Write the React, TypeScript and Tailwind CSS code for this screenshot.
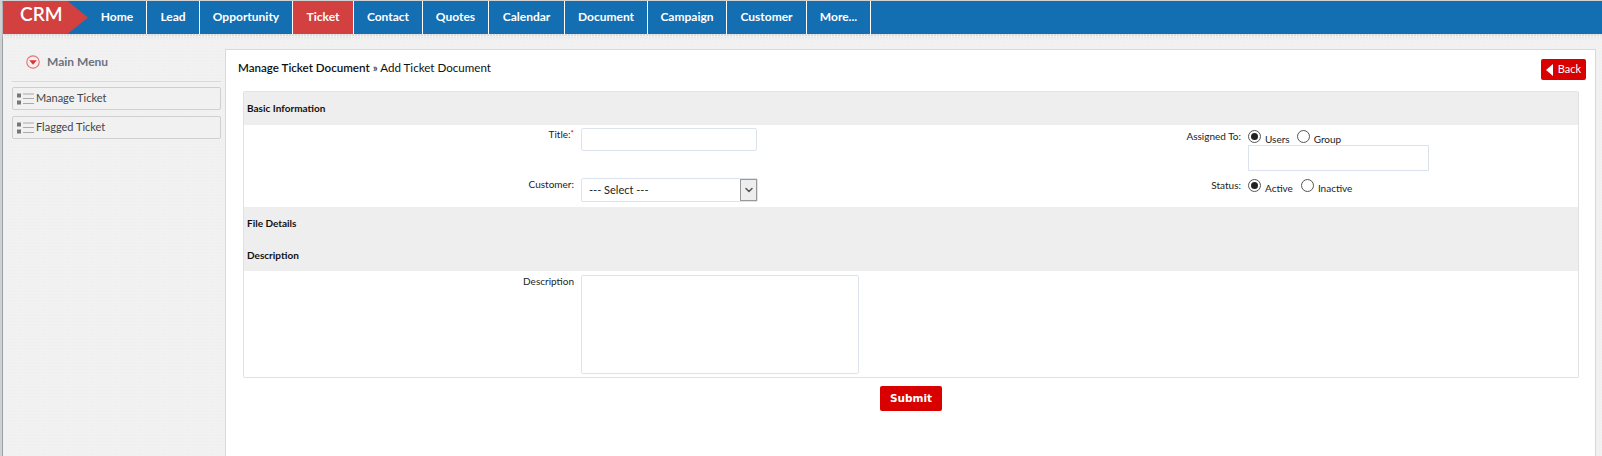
import { ChevronDown } from "lucide-react";

const navItems = [
  { name: "Home", width: "w-[59px]" },
  { name: "Lead", width: "w-[53px]" },
  { name: "Opportunity", width: "w-[93px]" },
  { name: "Ticket", width: "w-[61px]" },
  { name: "Contact", width: "w-[69px]" },
  { name: "Quotes", width: "w-[66px]" },
  { name: "Calendar", width: "w-[76px]" },
  { name: "Document", width: "w-[83px]" },
  { name: "Campaign", width: "w-[79px]" },
  { name: "Customer", width: "w-[80px]" },
  { name: "More...", width: "w-[64px]" },
];

const MenuIcon = () => (
  <svg width="17" height="12" viewBox="0 0 17 12" className="shrink-0">
    <rect x="0" y="0.5" width="4" height="4" fill="#777" />
    <rect x="0" y="7.5" width="4" height="4" fill="#777" />
    <rect x="6" y="0.5" width="11" height="1" fill="#aaa" />
    <rect x="6" y="5" width="11" height="1" fill="#aaa" />
    <rect x="6" y="10" width="11" height="1" fill="#aaa" />
  </svg>
);

const Radio = ({ label, checked }: { label: string; checked?: boolean }) => (
  <span className="flex items-start">
    <span className="flex h-[13px] w-[13px] items-center justify-center rounded-full border border-[#555] bg-white">
      {checked && <span className="h-[7px] w-[7px] rounded-full bg-[#222]" />}
    </span>
    <span className="ml-[4px] mt-[3px] text-[10px] leading-[13px]">{label}</span>
  </span>
);

const SectionHeader = ({ title, className }: { title: string; className: string }) => (
  <div className={`flex items-center bg-[#eeeeee] pl-[3px] text-[10px] font-bold text-[#111] ${className}`}>{title}</div>
);

const Label = ({ children }: { children: React.ReactNode }) => (
  <div className="w-[330px] shrink-0 text-right text-[10px] leading-[13px] text-[#222]">{children}</div>
);

export default function App() {
  return (
    <div className="h-[456px] w-[1602px] overflow-hidden border-l-[2px] border-t border-[#cfd1d3] bg-[#f2f2f2] font-['Lato',sans-serif]">
      <div className="flex h-full flex-col border-l border-[#9aa0a6]">
        <nav className="flex h-[33px] shrink-0 bg-[#136eb2] shadow-[0_3px_3px_#d8dadc]">
          <div className="flex h-[33px] w-[85px] shrink-0 bg-[#d24040] [clip-path:polygon(0_0,76%_0,100%_50%,76%_100%,0_100%)]">
            <span className="ml-[17px] text-[19px] font-semibold leading-[26px] text-white">CRM</span>
          </div>
          {navItems.map((item) => (
            <a
              key={item.name}
              className={`flex h-[33px] items-center justify-center border-r border-white pb-[1px] text-[12px] font-bold text-white ${item.width} ${item.name === "Ticket" ? "bg-[#d24040]" : ""}`}
            >
              {item.name}
            </a>
          ))}
        </nav>

        <div className="flex flex-1 pt-[15px] bg-[linear-gradient(0deg,#f0f0f0_1px,transparent_1px),linear-gradient(90deg,#f0f0f0_1px,transparent_1px)] bg-size-[3px_3px]">
          <aside className="w-[222px] shrink-0 pl-[9px] pr-[4px]">
            <div className="flex h-[33px] items-center border-b border-[#d9d9d9] pb-[6px] pl-[14px]">
              <svg width="14" height="14" viewBox="0 0 14 14" className="mr-[7px]">
                <circle cx="7" cy="7" r="6.2" fill="#f8f0f0" stroke="#e87575" strokeWidth="1.2" />
                <path d="M3.2 5.2h7.6L7 9.8z" fill="#d9363a" />
              </svg>
              <span className="text-[12px] font-bold text-[#6b7280]">Main Menu</span>
            </div>
            <div className="mt-[5px] flex flex-col gap-[6px]">
              {["Manage Ticket", "Flagged Ticket"].map((m) => (
                <div key={m} className="flex h-[23px] items-center gap-[2px] rounded-[2px] border border-[#cfcfcf] bg-[#f1f1f1] pl-[4px] text-[11px] text-[#444]">
                  <MenuIcon />
                  {m}
                </div>
              ))}
            </div>
          </aside>

          <main className="h-[500px] w-[1371px] border border-[#d9d9d9] bg-white px-[12px]">
            <div className="flex h-[41px] items-start justify-between">
              <div className="mt-[10px] text-[11.6px] leading-[16px] text-[#111]">
                <span className="font-semibold">Manage Ticket Document</span> » Add Ticket Document
              </div>
              <a className="mt-[9px] mr-[-3px] flex h-[21px] w-[45px] items-center justify-center gap-[5px] rounded-[2px] bg-[#d90000] text-[11px] text-white">
                <span className="h-0 w-0 border-y-[6px] border-r-[7px] border-y-transparent border-r-white" />
                Back
              </a>
            </div>

            <div className="ml-[5px] mr-[4px] h-[287px] rounded-[2px] border border-[#dfe1e5] border-t-[#e4e4e4]">
              <SectionHeader title="Basic Information" className="h-[33px]" />
              <div className="flex h-[82px]">
                <div className="flex w-[667px] shrink-0 flex-col">
                  <div className="mt-[3px] flex gap-[7px]">
                    <Label>
                      Title:<span className="align-[2px] text-[8px] leading-none text-[#d90000]">*</span>
                    </Label>
                    <input className="h-[23px] w-[176px] rounded-[2px] border border-[#dde3ec] bg-white" />
                  </div>
                  <div className="mt-[27px] flex gap-[7px]">
                    <Label>Customer:</Label>
                    <div className="flex h-[24px] w-[177px] items-center justify-between rounded-[2px] border border-[#dde3ec] pl-[7px] text-[11px] text-[#222]">
                      --- Select ---
                      <span className="flex h-[22px] w-[17px] items-center justify-center border border-[#999] bg-[#eeeeee]">
                        <ChevronDown size={12} strokeWidth={3} color="#555" />
                      </span>
                    </div>
                  </div>
                </div>
                <div className="flex flex-col">
                  <div className="mt-[5px] flex gap-[7px]">
                    <Label>Assigned To:</Label>
                    <div>
                      <div className="flex gap-[7px] text-[#222]">
                        <Radio label="Users" checked />
                        <Radio label="Group" />
                      </div>
                      <input className="-mt-px block h-[26px] w-[181px] border border-[#dde3ec] bg-white" />
                    </div>
                  </div>
                  <div className="mt-[8px] flex gap-[7px]">
                    <Label>Status:</Label>
                    <div className="flex gap-[8px] text-[#222]">
                      <Radio label="Active" checked />
                      <Radio label="Inactive" />
                    </div>
                  </div>
                </div>
              </div>
              <SectionHeader title="File Details" className="h-[32px]" />
              <SectionHeader title="Description" className="h-[32px]" />
              <div className="mt-[4px] flex gap-[7px]">
                <Label>Description</Label>
                <textarea className="h-[99px] w-[278px] resize-none rounded-[2px] border border-[#dde3ec] bg-white" />
              </div>
            </div>

            <div className="mt-[6px] ml-[642px]">
              <button className="h-[25px] w-[62px] rounded-[2px] bg-[#d90000] font-['DejaVu_Sans',sans-serif] text-[10.5px] font-bold text-white">Submit</button>
            </div>
          </main>
        </div>
      </div>
    </div>
  );
}
